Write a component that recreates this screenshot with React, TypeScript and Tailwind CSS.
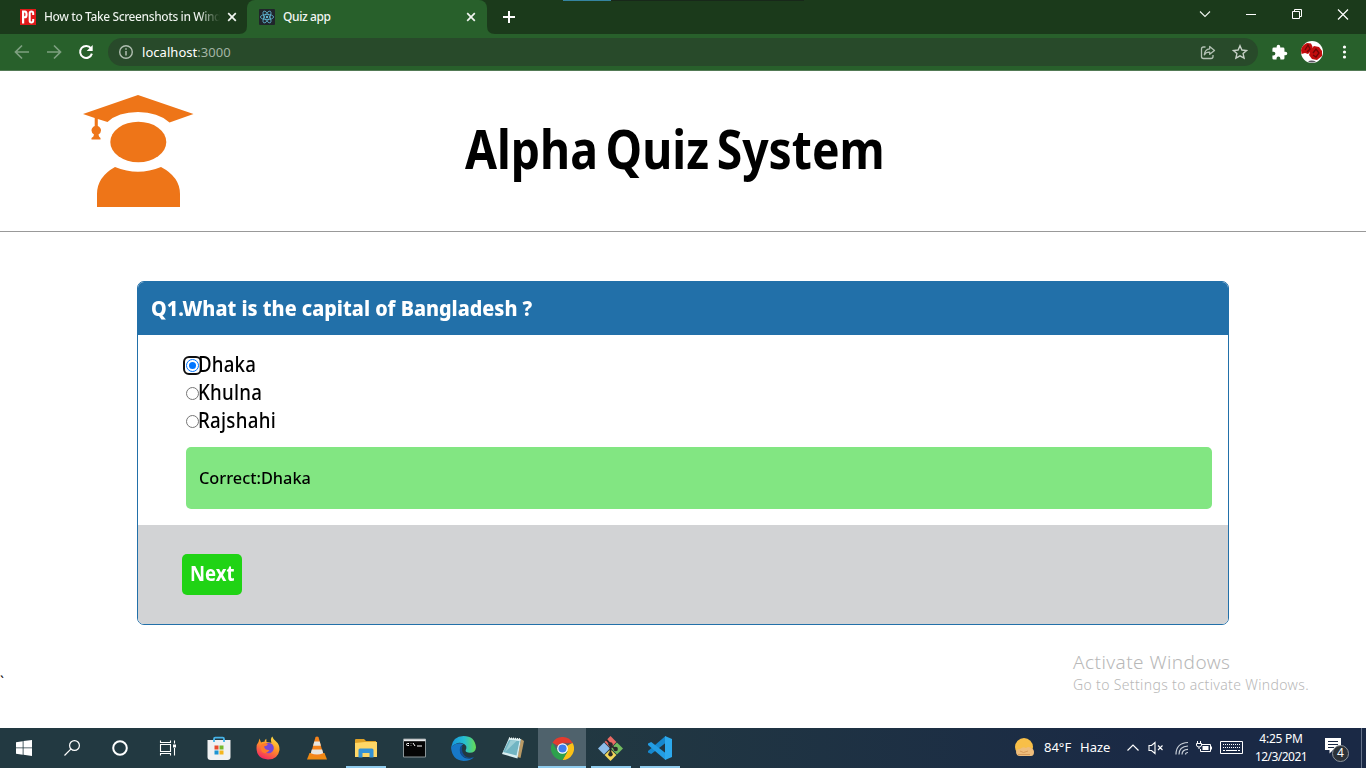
import type { ReactNode } from "react";

function PcMagIcon() {
  return (
    <svg className="h-4 w-4 shrink-0" viewBox="0 0 16 16">
      <rect width="16" height="16" fill="#e01919" />
      <path d="M2 14.500V1.500h3q2.600 0 2.600 3.900T5 9.300h-.8v5.200zM4.200 3.500v3.800q1.300.2 1.300-1.900T4.200 3.500" fill="#fff" fillRule="evenodd" />
      <path d="M13.200 6V4.200q0-1.700-1.800-1.700T9.700 4.200v7.600q0 1.700 1.700 1.700t1.800-1.700V10" fill="none" stroke="#fff" strokeWidth="2" />
    </svg>
  );
}

function ReactIcon() {
  return (
    <svg className="h-4 w-4 shrink-0" viewBox="0 0 16 16">
      <rect width="16" height="16" rx="1" fill="#20252b" />
      <g fill="none" stroke="#61b8d4" strokeWidth=".8">
        <ellipse cx="8" cy="8" rx="6.600" ry="2.600" />
        <ellipse cx="8" cy="8" rx="6.600" ry="2.600" transform="rotate(60 8 8)" />
        <ellipse cx="8" cy="8" rx="6.600" ry="2.600" transform="rotate(120 8 8)" />
      </g>
      <circle cx="8" cy="8" r="1.200" fill="#61b8d4" />
    </svg>
  );
}

function CloseGlyph() {
  return (
    <svg className="h-4 w-4 shrink-0" viewBox="0 0 16 16">
      <path d="M4.200 4.200l7.600 7.600M11.800 4.200l-7.600 7.600" stroke="#f1f5f1" strokeWidth="1.700" />
    </svg>
  );
}

function TabStrip() {
  return (
    <div className="flex h-[34px] bg-[#1b3a1b]">
      <div className="flex h-[34px] w-[247px] items-center pl-5">
        <PcMagIcon />
        <div className="ml-2 w-[176px] overflow-hidden bg-linear-to-r from-[#f2f6f2] from-88% to-[#1b3a1b] bg-clip-text text-[12px] leading-5 font-medium tracking-[-0.4px] whitespace-nowrap text-transparent">
          How to Take Screenshots in Wind
        </div>
        <div className="ml-1">
          <CloseGlyph />
        </div>
      </div>
      <div className="relative flex w-[240px] items-center rounded-t-lg bg-[#28602b] pl-3">
        <svg className="absolute bottom-0 -left-2 h-2 w-2" viewBox="0 0 8 8">
          <path d="M8 0v8H0Q8 8 8 0" fill="#28602b" />
        </svg>
        <svg className="absolute -right-2 bottom-0 h-2 w-2" viewBox="0 0 8 8">
          <path d="M0 0v8h8Q0 8 0 0" fill="#28602b" />
        </svg>
        <ReactIcon />
        <span className="ml-2 flex-1 text-[12px] leading-5 font-medium tracking-[-0.4px] text-[#f2f6f2]">Quiz app</span>
        <div className="mr-2">
          <CloseGlyph />
        </div>
      </div>
      <svg className="mt-[9px] ml-[14px] h-4 w-4" viewBox="0 0 16 16">
        <path d="M8 2v12M2 8h12" stroke="#fff" strokeWidth="2" />
      </svg>
      <div className="ml-[46px] flex h-px w-[241px] bg-[#18281a]">
        <div className="h-px w-12 bg-[#3584a0]" />
      </div>
      <div className="mt-[6px] ml-auto flex h-4">
        <svg className="mr-[30px] h-4 w-4" viewBox="0 0 16 16">
          <path d="M3 5.500l5 5 5-5" fill="none" stroke="#eef4ee" strokeWidth="1.100" />
        </svg>
        <svg className="mr-[30px] h-4 w-4" viewBox="0 0 16 16">
          <path d="M3 8.500h10" stroke="#fff" />
        </svg>
        <svg className="mr-[30px] h-4 w-4" viewBox="0 0 16 16">
          <path d="M3.500 5.500h7v7h-7zM5.500 5.500v-2h7v7h-2" fill="none" stroke="#fff" />
        </svg>
        <svg className="mr-[15px] h-4 w-4" viewBox="0 0 16 16">
          <path d="M3 3.500l10 10M13 3.500l-10 10" stroke="#fff" strokeWidth="1.200" />
        </svg>
      </div>
    </div>
  );
}

function Toolbar() {
  return (
    <div className="flex h-[37px] items-center border-b border-[#527a55] bg-[#28602b]">
      <svg className="ml-[14px] h-4 w-4" viewBox="0 0 16 16">
        <path d="M15 8H2M8 1.500L1.500 8 8 14.500" fill="none" stroke="#7ea080" strokeWidth="1.700" />
      </svg>
      <svg className="ml-4 h-4 w-4" viewBox="0 0 16 16">
        <path d="M1 8h13M8 1.500L14.500 8 8 14.500" fill="none" stroke="#7ea080" strokeWidth="1.700" />
      </svg>
      <svg className="ml-4 h-4 w-4" viewBox="0 0 16 16">
        <path d="M13 4.400A6 6 0 1 0 13.900 9.600" fill="none" stroke="#fff" strokeWidth="2" />
        <path d="M14.700 1v6H8.700z" fill="#fff" />
      </svg>
      <div className="ml-[14px] flex h-7 w-[1150px] items-center rounded-full bg-[#284a2a] pr-[10px] pl-[10px]">
        <svg className="h-4 w-4" viewBox="0 0 16 16">
          <circle cx="8" cy="8" r="6.300" fill="none" stroke="#b0beb1" strokeWidth="1.400" />
          <path d="M8 7v4.500M8 4.200v1.600" stroke="#b0beb1" strokeWidth="1.500" />
        </svg>
        <span className="ml-2 text-[13px] leading-5 tracking-[0.04px] text-[#a4b5a5]">
          <span className="text-white">localhost</span>:3000
        </span>
        <svg className="ml-auto h-4 w-4" viewBox="0 0 16 16" fill="none" stroke="#b3c1b4" strokeWidth="1.300">
          <path d="M5.500 3H3.500Q1.500 3 1.500 5v7.500q0 2 2 2h7.500q2 0 2-2V11" />
          <path d="M9.700 2.500L14.500 6.500 9.700 10.300V8.200Q6 8 4.300 10.800 4.800 5.300 9.700 4.800z" strokeLinejoin="round" />
        </svg>
        <svg className="ml-4 h-4 w-4" viewBox="0 0 16 16">
          <path d="M8 1.700l1.900 4.300 4.700.5-3.500 3.100 1 4.600L8 11.800l-4.100 2.400 1-4.600L1.400 6.500l4.700-.5z" fill="none" stroke="#c6d0c6" strokeWidth="1.400" />
        </svg>
      </div>
      <svg className="ml-[13px] h-[17px] w-[17px]" viewBox="0 0 24 24">
        <path d="M20.500 11H19V7a2 2 0 0 0-2-2h-4V3.500a2.500 2.500 0 0 0-5 0V5H4a2 2 0 0 0-2 2v3.800h1.500a2.700 2.700 0 0 1 0 5.400H2V20a2 2 0 0 0 2 2h3.800v-1.500a2.700 2.700 0 0 1 5.400 0V22H17a2 2 0 0 0 2-2v-4h1.500a2.500 2.500 0 0 0 0-5" fill="#fff" />
      </svg>
      <svg className="ml-[13px] h-[22px] w-[22px]" viewBox="0 0 22 22">
        <circle cx="11" cy="11" r="11" fill="#fff" />
        <path d="M0 9Q1 4 6 2l4 .5 1.500 3L10 10l-3 3-3-1-3.500 1zM10 8l3-3 5 1 3 4v5l-5 4-5-1-3-4z" fill="#c20d0d" />
        <path d="M4 9l3-5 2 4-3 3M12 12l3-4 3 4-3 4-3-2" fill="none" stroke="#720707" strokeWidth="1.300" />
        <path d="M7 20.500q3-2 8 0-4 2-8 0" fill="#5b5660" />
      </svg>
      <svg className="ml-[13px] h-4 w-4" viewBox="0 0 16 16" fill="#fff">
        <circle cx="8.500" cy="3" r="1.600" />
        <circle cx="8.500" cy="8" r="1.600" />
        <circle cx="8.500" cy="13" r="1.600" />
      </svg>
    </div>
  );
}

function GraduateLogo() {
  return (
    <svg className="h-[114px] w-[112px]" viewBox="0 0 112 114" fill="#ee7518">
      <path d="M1 20L56 1l55.500 19-24 8.500Q76 18 56 18T25.500 28L15.800 25v7q3.200 1.500 3.200 4.500 0 2.500-2.500 4 0 2 2 3.500v1.500H9.500V44q2.500-1.500 2.500-3.500-2.500-1.500-2.500-4 0-3 3.200-4.500v-8z" />
      <ellipse cx="56.300" cy="48" rx="28" ry="20.300" />
      <path d="M33 73q23 9.500 46 0 19 10 19 27v13H15v-13q0-17 18-27" />
    </svg>
  );
}

function Option({ label, checked = false }: { label: string; checked?: boolean }) {
  return (
    <label className="flex h-7 items-center">
      <span
        className={
          checked
            ? "-ml-[3px] flex h-[19px] w-[19px] items-center justify-center rounded-[6px] border-2 border-[#101010]"
            : "flex h-[13px] w-[13px] items-center justify-center rounded-full border border-[#767676]"
        }
      >
        {checked && (
          <span className="flex h-[13px] w-[13px] shrink-0 items-center justify-center rounded-full border border-[#0075ff]">
            <span className="h-[7px] w-[7px] shrink-0 rounded-full bg-[#0075ff]" />
          </span>
        )}
      </span>
      <span
        className={
          checked
            ? "-ml-[4px] origin-left scale-x-[.89] pb-[2px] text-[21px] leading-7 font-medium tracking-[0.2px]"
            : "-ml-px origin-left scale-x-[.89] pb-[2px] text-[21px] leading-7 font-medium tracking-[0.3px]"
        }
      >
        {label}
      </span>
    </label>
  );
}

function QuizPage() {
  return (
    <main className="flex h-[657px] flex-col bg-white text-black">
      <header className="flex h-[161px] items-start border-b border-[#999] pt-[23px] pl-[82px]">
        <GraduateLogo />
        <h1 className="mt-[14px] ml-[271px] w-[520px] origin-left scale-x-[.857] text-[54px] leading-[80px] font-bold [word-spacing:-5px] whitespace-nowrap">
          Alpha Quiz System
        </h1>
      </header>
      <section className="mt-[49px] ml-[137px] flex h-[344px] w-[1092px] flex-col overflow-hidden rounded-[7px] border border-[#2270a9]">
        <div className="flex h-[53px] items-center bg-[#2270a9] pb-[3px] pl-[13px]">
          <h2 className="origin-left scale-x-[.899] text-[22px] font-extrabold whitespace-nowrap text-white">
            Q1.What is the capital of Bangladesh ?
          </h2>
        </div>
        <div className="flex h-[190px] flex-col pt-4 pr-4 pl-12">
          <Option label="Dhaka" checked />
          <Option label="Khulna" />
          <Option label="Rajshahi" />
          <div className="mt-3 flex h-[62px] items-center rounded-[5px] bg-[#82e682] pl-[13px]">
            <span className="origin-left scale-x-[.96] text-[17px] font-medium">Correct:Dhaka</span>
          </div>
        </div>
        <div className="flex flex-1 items-start bg-[#d2d3d5] pt-[29px] pl-11">
          <button className="flex h-[41px] w-[60px] items-center justify-center rounded-[5px] bg-[#20d315] pb-px">
            <span className="scale-x-[.88] text-[21px] font-bold text-white">Next</span>
          </button>
        </div>
      </section>
      <div className="flex items-start">
        <span className="mt-[45px] text-[14px] leading-6">`</span>
        <div className="mt-[25px] ml-auto w-[293px] whitespace-nowrap text-[#b8b8b8]">
          <p className="text-[19px] leading-6 font-light tracking-[0.44px]">Activate Windows</p>
          <p className="text-[14px] leading-[22px] font-light tracking-[0.35px]">Go to Settings to activate Windows.</p>
        </div>
      </div>
    </main>
  );
}

function Task({ children, state = "idle" }: { children: ReactNode; state?: "idle" | "open" | "active" }) {
  return (
    <div
      className={
        state === "active"
          ? "ml-px flex h-10 w-12 flex-col items-center bg-[#4f626c]"
          : "flex h-10 w-[49px] flex-col items-center"
      }
    >
      <div className="flex h-[38px] items-center pt-[2px]">{children}</div>
      {state === "open" && <div className="h-[2px] w-10 bg-[#8fcbed]" />}
      {state === "active" && <div className="h-[2px] w-full bg-[#8fcbed]" />}
    </div>
  );
}

function Taskbar() {
  return (
    <footer className="flex h-10 bg-linear-to-r from-[#223941] from-40% to-[#1a2945] to-85% text-white">
      <div className="flex w-[194px] items-center">
        <svg className="ml-4 h-4 w-4" viewBox="0 0 16 16" fill="#fff">
          <path d="M0 2.200l6.700-1v6.300H0zM7.500 1.100L16 0v7.500H7.500zM0 8.300h6.700v6.400L0 13.800zM7.500 8.300H16V16l-8.500-1.200z" />
        </svg>
        <svg className="ml-[31px] h-[18px] w-[18px]" viewBox="0 0 18 18" fill="none" stroke="#fff" strokeWidth="1.200">
          <circle cx="11.500" cy="6.500" r="4.900" />
          <path d="M7.800 10.200L1.500 16.500" />
        </svg>
        <svg className="ml-[30px] h-[18px] w-[18px]" viewBox="0 0 18 18">
          <circle cx="9" cy="9" r="6.800" fill="none" stroke="#fff" strokeWidth="2" />
        </svg>
        <svg className="ml-[30px] h-[18px] w-[18px]" viewBox="0 0 18 18" fill="none" stroke="#fff" strokeWidth="1.100">
          <path d="M1.500 1.500v2h10v-2M1.500 16.500v-2h10v2M1.500 5.500h10v7h-10zM15.500 1.500v3M15.500 9v7.500" />
          <path d="M14 5.500h3v3h-3z" fill="#fff" stroke="none" />
        </svg>
      </div>
      <Task>
        <svg className="h-6 w-6" viewBox="0 0 24 24">
          <path d="M7 6V3q0-1.300 1.300-1.300h7.400Q17 1.700 17 3v3" fill="none" stroke="#46b4e8" strokeWidth="1.800" />
          <path d="M.5 4h23v17q0 3-3 3h-17q-3 0-3-3z" fill="#f0f1f2" />
          <path d="M7 3.500V6M17 3.500V6" stroke="#46b4e8" strokeWidth="1.800" />
          <path d="M7.500 9.500h4v4h-4z" fill="#e84b2c" />
          <path d="M12.500 9.500h4v4h-4z" fill="#76b82a" />
          <path d="M7.500 14.500h4v4h-4z" fill="#1c95d4" />
          <path d="M12.500 14.500h4v4h-4z" fill="#f4b61d" />
        </svg>
      </Task>
      <Task>
        <svg className="h-6 w-6" viewBox="0 0 24 24">
          <defs>
            <linearGradient id="fox" x1=".8" y1="0" x2=".3" y2="1">
              <stop offset="0" stopColor="#ffe447" />
              <stop offset=".45" stopColor="#ff9526" />
              <stop offset="1" stopColor="#f32465" />
            </linearGradient>
          </defs>
          <path d="M3.500 2.500L5 6.500q1.500-1 3.500-.7 0-1.800 1.800-3L10.500 6l5 .8Q14 3 16.300.6q.7 2.400 3 4.100Q24 8.500 23.500 14 22 23.500 12 23.500.500 22.500.500 12 .500 8 2.500 6z" fill="url(#fox)" />
          <circle cx="12.500" cy="12" r="5.300" fill="#7548d8" />
          <path d="M5 9q3-3 7-1-1 2-4 2.500 1 4 5.500 3.500-3 5-7.500 2Q4 13 5 9" fill="#ff7a2b" />
        </svg>
      </Task>
      <Task>
        <svg className="h-6 w-6" viewBox="0 0 24 24">
          <path d="M4.500 17h15l2.500 6.500H2z" fill="#f08a12" />
          <path d="M10.500 1q1.500-1 3 0l5 18q-6.500 4-13 0z" fill="#f5831c" />
          <path d="M9.300 5.500h5.400l1.200 4.200H8.100zM6.800 13.500h10.400l1 3.700q-6.200 2.500-12.400 0z" fill="#e8e6e1" />
        </svg>
      </Task>
      <Task state="open">
        <svg className="h-6 w-6" viewBox="0 0 24 24">
          <path d="M1 4q0-1 1-1h8l2 2h10v4H1z" fill="#dea126" />
          <path d="M1 7l10-1h12v15H1z" fill="#ffd766" />
          <path d="M4.500 21.500V14q0-1.500 1.500-1.500h12q1.500 0 1.500 1.500v7.500h-4V17h-7v4.500z" fill="#3492d5" />
        </svg>
      </Task>
      <Task>
        <svg className="h-6 w-6" viewBox="0 0 24 24">
          <path d="M.5 3h22v18H.5z" fill="#050505" stroke="#8b9699" />
          <path d="M1 3.200h21.500v2H1z" fill="#e6e9ea" />
          <path d="M6 7.500H4.500q-1 0-1 1t1 1H6M8 7.500V8M8 9.200v.5M10 7l2 3M14 10h5" fill="none" stroke="#fff" />
        </svg>
      </Task>
      <Task>
        <svg className="h-[25px] w-[25px]" viewBox="0 0 24 24">
          <defs>
            <linearGradient id="wave">
              <stop stopColor="#1695df" />
              <stop offset=".55" stopColor="#27bfd0" />
              <stop offset="1" stopColor="#67db51" />
            </linearGradient>
          </defs>
          <path d="M0 11Q2 0 12 0q11 0 12 11-.5 5-6 5-4 0-4-2 2-4-1-6Q7 4 0 11" fill="url(#wave)" />
          <path d="M0 11q6-6 12-3-4 2-3 8 2 6 9 5.500 2 0 4-1Q19 24 12 24 1 23 0 11" fill="#1778c8" />
          <path d="M9 10q-3 10 9 11.500 3 0 4-1-8 2-11-5-1-4 0-6z" fill="#124d94" />
        </svg>
      </Task>
      <Task>
        <svg className="h-6 w-6" viewBox="0 0 24 24">
          <path d="M20 3l3 2-3.500 17-3-1z" fill="#b99a65" />
          <path d="M8 2l12 1-3.500 19.500L1 18z" fill="#d9eef1" />
          <path d="M8 4l10.500 1-3 14.500L2 16z" fill="#72b5c3" />
          <path d="M9.500 4.500l6 .5L4 16z" fill="#9bced6" />
          <path d="M8 2l12 1" stroke="#eef4f4" strokeWidth="1.500" strokeDasharray="1 1" />
        </svg>
      </Task>
      <Task state="active">
        <svg className="h-[23px] w-[23px]" viewBox="0 0 24 24">
          <path d="M12 12L1.600 6A12 12 0 0 1 22.400 6H12z" fill="#e33b2e" />
          <path d="M12 12L22.400 6A12 12 0 0 1 12 24l5.200-9z" fill="#fbc116" />
          <path d="M12 12l5.200 3L12 24A12 12 0 0 1 1.600 6l5.200 9z" fill="#2da14c" />
          <path d="M12 6h10.400" stroke="#e33b2e" />
          <circle cx="12" cy="12" r="5.600" fill="#fff" />
          <circle cx="12" cy="12" r="4.300" fill="#3e7ded" />
        </svg>
      </Task>
      <Task state="open">
        <svg className="h-[25px] w-[25px]" viewBox="0 0 24 24">
          <path d="M12 0l5.700 5.700L12 11.400 6.300 5.700z" fill="#e96a64" />
          <path d="M18.200 6.200L24 12l-5.800 5.800-5.700-5.800z" fill="#72bb5f" />
          <path d="M5.800 6.200l5.700 5.800-5.700 5.800L0 12z" fill="#8cbdea" />
          <path d="M12 12.600l5.700 5.700L12 24l-5.700-5.700z" fill="#f2d65a" />
          <path d="M8 3.500l4 4.500v10M12 8.500l4.500 4" fill="none" stroke="#29282c" strokeWidth="1.800" />
          <g fill="#29282c">
            <circle cx="12" cy="8" r="2.100" />
            <circle cx="12" cy="17.500" r="2.100" />
            <circle cx="17" cy="12.500" r="2.100" />
          </g>
        </svg>
      </Task>
      <Task state="open">
        <svg className="h-6 w-6" viewBox="0 0 24 24">
          <path d="M17.500 0v7L3.200 18 0 16.500v-1.500z" fill="#1688ce" />
          <path d="M17.500 24v-7L3.200 6 0 7.500V9z" fill="#239de3" />
          <path d="M17 0l7 3v18l-7 3z" fill="#2ca9ed" />
        </svg>
      </Task>
      <div className="ml-auto flex w-[353px] items-center">
        <svg className="h-[22px] w-[22px]" viewBox="0 0 22 22">
          <circle cx="11" cy="10" r="9" fill="#f8bf48" />
          <path d="M3 15q0-3 4-3 3-3 6-1 2-2 5 0 3 1 3 4 0 4-3 4H7q-4 0-4-4" fill="#efbd7b" />
          <path d="M7 14q3 3 8 0M5 17.500h12" fill="none" stroke="#d69a58" />
        </svg>
        <span className="ml-[9px] w-7 text-[13px]">84°F</span>
        <span className="ml-2 w-[31px] text-[13px]">Haze</span>
        <svg className="ml-[14px] h-4 w-4" viewBox="0 0 16 16">
          <path d="M2.500 10.500L8 5l5.500 5.500" fill="none" stroke="#fff" strokeWidth="1.200" />
        </svg>
        <svg className="ml-[7px] h-4 w-4" viewBox="0 0 16 16" fill="none" stroke="#fff" strokeWidth="1.100">
          <path d="M1 5.500h2.500l3.500-3v11l-3.500-3H1zM10 5.500l4.500 4.500M14.500 5.500L10 10" />
        </svg>
        <svg className="ml-[10px] h-4 w-4" viewBox="0 0 16 16" fill="none" stroke="#c7ced7" strokeWidth="1.200">
          <path d="M2 14.500Q2 3 14 2.500M5 14.500q0-8 9-8.500M8 14.500q0-5 6-5.200M11.500 14.500q0-2 2.500-2" />
        </svg>
        <svg className="ml-[6px] h-4 w-4" viewBox="0 0 16 16" fill="none" stroke="#fff">
          <path d="M6 4.500h8.500v7H4.500V9M15.500 6.500v3M.5 3.500h5v1.500q0 2-2.500 2T.5 5zM1.500 1v2.500M4.500 1v2.500M3 7v2" />
          <path d="M6.500 6h6v4h-6z" fill="#fff" stroke="none" />
        </svg>
        <svg className="ml-[8px] h-[14px] w-[23px]" viewBox="0 0 23 14">
          <path d="M.5.500h22v12H.5z" fill="none" stroke="#fff" />
          <path d="M3 3.500h17M3 6.500h17" stroke="#fff" strokeDasharray="1 1" />
          <path d="M3 9.500h2M6 9.500h11M18 9.500h2" stroke="#fff" />
        </svg>
        <div className="ml-[9px] w-[58px] text-center text-[12px] leading-[18px] whitespace-nowrap">
          <p className="tracking-[-0.25px]">4:25 PM</p>
          <p className="tracking-[-0.55px]">12/3/2021</p>
        </div>
        <div className="relative ml-[14px] h-[25px] w-[26px]">
          <svg className="h-[18px] w-[18px]" viewBox="0 0 18 18">
            <path d="M1 2h16v12H9l-3.500 3.500V14H1z" fill="#fff" />
            <path d="M4 5.500h10M4 8.500h10M4 11.500h6" stroke="#1a2945" />
          </svg>
          <span className="absolute top-[9px] left-2 flex h-[17px] w-[17px] items-center justify-center rounded-full border border-[#8e959c] bg-[#2c3238] text-[12px] leading-none">
            4
          </span>
        </div>
        <div className="ml-auto h-10 w-[5px] border-l border-[#66738a]" />
      </div>
    </footer>
  );
}

export default function App() {
  return (
    <div className="h-[768px] w-[1366px] overflow-hidden font-['Noto_Sans','Open_Sans',sans-serif]">
      <TabStrip />
      <Toolbar />
      <QuizPage />
      <Taskbar />
    </div>
  );
}
